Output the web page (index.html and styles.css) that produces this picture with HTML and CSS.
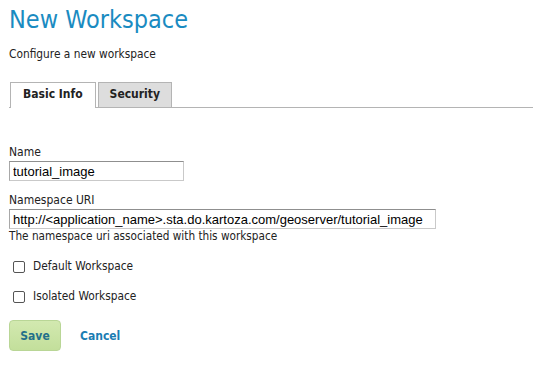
FILE: index.html
```html
<!DOCTYPE html>
<html>
<head>
<meta charset="utf-8">
<link rel="stylesheet" href="styles.css">
</head>
<body>
<div class="page">
  <h1 class="title">New Workspace</h1>
  <p class="subtitle">Configure a new workspace</p>
  <div class="tabs">
    <div class="tab active">Basic Info</div>
    <div class="tab">Security</div>
  </div>
  <form class="form">
    <div class="field">
      <label class="label">Name</label>
      <input class="input input-name" type="text" value="tutorial_image">
    </div>
    <div class="field field-uri">
      <label class="label">Namespace URI</label>
      <input class="input input-uri" type="text" value="http://&lt;application_name&gt;.sta.do.kartoza.com/geoserver/tutorial_image">
      <div class="help">The namespace uri associated with this workspace</div>
    </div>
    <label class="check check-first"><span class="box"></span>Default Workspace</label>
    <label class="check"><span class="box"></span>Isolated Workspace</label>
    <div class="actions">
      <span class="btn-save">Save</span>
      <span class="btn-cancel">Cancel</span>
    </div>
  </form>
</div>
</body>
</html>
```
FILE: styles.css
```css
html, body { margin: 0; padding: 0; background: #fff; }
body { font-family: "DejaVu Sans Condensed", "DejaVu Sans", Verdana, sans-serif; color: #222; font-size: 12px; }
.page { padding: 0 9px; }
.title {
  margin: 0; padding-top: 5px;
  font-weight: normal; font-size: 25px; line-height: 30px;
  color: #1a8bc1;
}
.subtitle { margin: 12px 0 0; font-size: 11.8px; line-height: 15px; color: #222; }
.tabs {
  display: flex; align-items: flex-end; gap: 2px;
  margin-top: 20px; margin-right: -9px; padding-left: 1px;
  height: 25px; border-bottom: 1px solid #b4b4b4;
}
.tab {
  box-sizing: border-box; height: 25px; line-height: 23px;
  padding: 0 11px; font-size: 12px; font-weight: bold; color: #222;
  border: 1px solid #b4b4b4; border-bottom: none; background: #ddd;
}
.tab.active { background: #fff; height: 26px; margin-bottom: -1px; padding: 0 12px 0 12px; }
.form { margin-top: 37px; }
.label { display: block; font-size: 12px; line-height: 15px; color: #222; margin-bottom: 1px; }
.input {
  display: block; box-sizing: border-box; margin: 0;
  height: 20px; padding: 0 3px;
  border: 1px solid #c9c9c9; border-top-color: #8f8f8f; border-left-color: #a8a8a8;
  font-family: "Liberation Sans", Arial, sans-serif;
  font-size: 13px; color: #000; background: #fff; outline: none;
}
.input-name { width: 175px; }
.input-uri { width: 427px; }
.field-uri { margin-top: 12px; }
.help { font-size: 11.7px; line-height: 15px; color: #222; }
.check {
  display: flex; align-items: center; height: 15px; line-height: 15px;
  margin-top: 15px; padding-left: 4px; font-size: 11.8px; color: #222;
}
.box {
  box-sizing: border-box; width: 12px; height: 12px;
  border: 1px solid #555; border-radius: 2px; margin-right: 8px; background: #fff;
}
.actions { display: flex; align-items: center; gap: 19px; margin-top: 16px; }
.btn-save {
  width: 52px; height: 31px; box-sizing: border-box;
  border: 1px solid #b9d696; border-radius: 4px;
  background: linear-gradient(#d2e9b0, #c3df9b);
  display: flex; align-items: center; justify-content: center;
  font-size: 12px; font-weight: bold; color: #22708a;
}
.btn-cancel { font-size: 12px; font-weight: bold; color: #1b7db3; }
```
